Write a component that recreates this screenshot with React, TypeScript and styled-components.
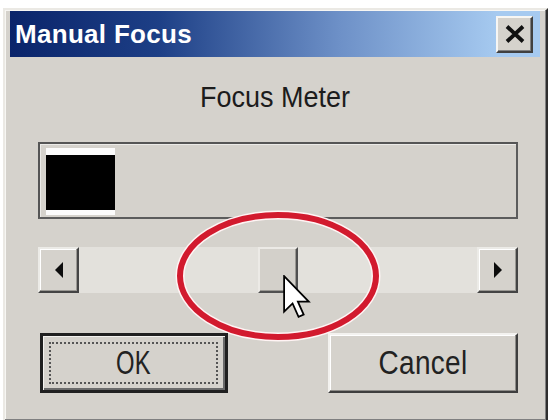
import React from "react";
import styled, { createGlobalStyle } from "styled-components";

const GlobalStyle = createGlobalStyle`
  html, body {
    margin: 0;
    padding: 0;
    background: #ffffff;
  }
  body {
    font-family: "Liberation Sans", Arial, sans-serif;
    overflow: hidden;
  }
`;

const FACE = "#d5d2cc";
const LIGHT = "#f7f6f3";
const SHADOW = "#808080";
const DARK = "#2e2e2e";

const focusValue = 50; // 0..100, slider position
const meterLevel = 0.148; // share of the meter that is lit

const Window = styled.div`
  box-sizing: border-box;
  margin: 8px 0 0 3px;
  width: 545px;
  height: 414px;
  background: ${FACE};
  border: 2px solid;
  border-color: #ebe9e4 ${DARK} ${DARK} #ebe9e4;
  box-shadow: inset -1px -1px 0 ${SHADOW}, inset 1px 1px 0 ${LIGHT};
  padding: 1px 6px 0 5px;
  display: flex;
  flex-direction: column;
`;

const TitleBar = styled.div`
  height: 46px;
  display: flex;
  align-items: center;
  justify-content: space-between;
  padding: 0 7px 0 5px;
  background: linear-gradient(90deg, #0a246a 0%, #1d3f86 28%, #6d90c7 62%, #a6caf0 92%);
`;

const Title = styled.span`
  color: #ffffff;
  font-weight: bold;
  font-size: 26px;
  letter-spacing: 0.3px;
`;

const CloseButton = styled.div`
  box-sizing: border-box;
  width: 37px;
  height: 37px;
  display: flex;
  align-items: center;
  justify-content: center;
  background: ${FACE};
  border: 2px solid;
  border-color: ${LIGHT} #404040 #404040 ${LIGHT};
  box-shadow: inset -1px -1px 0 ${SHADOW};
`;

const Content = styled.div`
  display: flex;
  flex-direction: column;
  padding: 0 22px 0 28px;
`;

const Caption = styled.div`
  margin-top: 25px;
  text-align: center;
  font-size: 27px;
  line-height: 31px;
  color: #1c1c1c;
  transform: scaleY(1.08);
  padding-right: 6px;
`;

const MeterBox = styled.div`
  box-sizing: border-box;
  margin-top: 29px;
  height: 77px;
  border: 2px solid;
  border-color: #555555 #5c5c5c #5c5c5c #555555;
  box-shadow: inset 1px 1px 0 #ecebe8;
  padding: 4px 6px;
  display: flex;
  align-items: stretch;
`;

const MeterLevel = styled.div`
  box-sizing: border-box;
  height: 67px;
  background: #000000;
  border-top: 7px solid #fbfbfb;
  border-bottom: 5px solid #fbfbfb;
`;

const ScrollBar = styled.div`
  position: relative;
  margin-top: 28px;
  height: 46px;
  display: flex;
`;

const ArrowButton = styled.div`
  box-sizing: border-box;
  width: 41px;
  height: 46px;
  flex: none;
  display: flex;
  align-items: center;
  justify-content: center;
  background: ${FACE};
  border: 2px solid;
  border-color: #ecebe7 #444444 #444444 #ecebe7;
  box-shadow: inset -1px -1px 0 #9a9893, inset 1px 1px 0 #ffffff;
`;

const Track = styled.div`
  flex: 1;
  display: flex;
  align-items: stretch;
  background-color: #e3e1dc;
  background-image: radial-gradient(#eeede9 0.6px, transparent 0.7px);
  background-size: 2px 2px;
`;

const Thumb = styled.div`
  box-sizing: border-box;
  width: 40px;
  height: 46px;
  flex: none;
  background: #d3d0ca;
  border: 2px solid;
  border-color: #eceae6 #505050 #505050 #eceae6;
  box-shadow: inset -1px -1px 0 #9a9893;
`;

const Highlight = styled.svg`
  position: absolute;
  left: 137px;
  top: -37px;
  pointer-events: none;
`;

const Pointer = styled.svg`
  position: absolute;
  left: 245px;
  top: 28px;
  pointer-events: none;
`;

const ButtonRow = styled.div`
  margin-top: 40px;
  padding-left: 2px;
  display: flex;
  justify-content: space-between;
`;

const DialogButton = styled.div<{ $default?: boolean }>`
  box-sizing: border-box;
  width: ${({ $default }) => ($default ? "188px" : "190px")};
  height: 60px;
  display: flex;
  align-items: center;
  justify-content: center;
  background: ${FACE};
  color: #222222;
  font-size: 28px;
  border: ${({ $default }) => ($default ? "3px solid #202020" : "2px solid")};
  border-color: ${({ $default }) => ($default ? "#202020" : `#f3f2ef #3e3e3e #3e3e3e #f3f2ef`)};
  box-shadow: ${({ $default }) =>
    $default
      ? `inset 1px 1px 0 #f3f2ef, inset -2px -2px 0 #6a6a6a`
      : `inset -1px -1px 0 #8e8c88, inset 1px 1px 0 #ffffff`};
  position: relative;
`;

const FocusRing = styled.div`
  position: absolute;
  inset: 6px 7px 6px 6px;
  border: 2px dotted #555555;
  pointer-events: none;
`;

const ButtonLabel = styled.span<{ $narrow?: boolean }>`
  display: inline-block;
  transform: ${({ $narrow }) => ($narrow ? "scale(0.85, 1.2)" : "scaleY(1.2)")};
  letter-spacing: 0.3px;
`;

const LeftArrow = () => (
  <svg width="12" height="18" viewBox="0 0 12 18">
    <path d="M10 1 L2 9 L10 17 Z" fill="#0c0c0c" />
  </svg>
);

const RightArrow = () => (
  <svg width="12" height="18" viewBox="0 0 12 18">
    <path d="M2 1 L10 9 L2 17 Z" fill="#0c0c0c" />
  </svg>
);

export default function App() {
  const thumbOffset = `calc((100% - 40px) * ${focusValue / 100})`;
  return (
    <>
      <GlobalStyle />
      <Window>
        <TitleBar>
          <Title>Manual Focus</Title>
          <CloseButton>
            <svg width="20" height="18" viewBox="0 0 20 18">
              <path d="M2 1.5 L18 16.5 M18 1.5 L2 16.5" stroke="#111" strokeWidth="3.8" />
            </svg>
          </CloseButton>
        </TitleBar>
        <Content>
          <Caption>Focus Meter</Caption>
          <MeterBox>
            <MeterLevel style={{ width: `${meterLevel * 100}%` }} />
          </MeterBox>
          <ScrollBar>
            <ArrowButton>
              <LeftArrow />
            </ArrowButton>
            <Track>
              <div style={{ width: thumbOffset, flex: "none" }} />
              <Thumb />
            </Track>
            <ArrowButton>
              <RightArrow />
            </ArrowButton>
            <Highlight width="206" height="132" viewBox="0 0 206 132">
              <ellipse cx="103" cy="66" rx="98" ry="61" fill="none" stroke="#fff4f4" strokeWidth="9" />
              <ellipse cx="103" cy="66" rx="98" ry="61" fill="none" stroke="#d21a2e" strokeWidth="6" />
            </Highlight>
            <Pointer width="28" height="44" viewBox="0 0 12.6 19.8">
              <path
                d="M0.5 0.5 L0.5 16.5 L4.3 12.8 L7 18.8 L9.3 17.8 L6.7 12 L11.6 12 Z"
                fill="#ffffff"
                stroke="#000000"
                strokeWidth="0.8"
                strokeLinejoin="miter"
              />
            </Pointer>
          </ScrollBar>
          <ButtonRow>
            <DialogButton $default>
              <FocusRing />
              <ButtonLabel $narrow>OK</ButtonLabel>
            </DialogButton>
            <DialogButton>
              <ButtonLabel>Cancel</ButtonLabel>
            </DialogButton>
          </ButtonRow>
        </Content>
      </Window>
    </>
  );
}
